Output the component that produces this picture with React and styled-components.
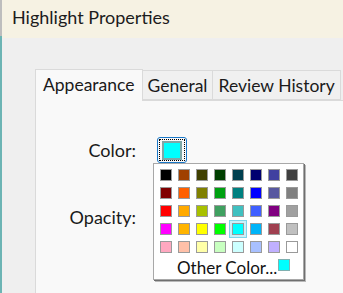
import React from 'react';
import styled, { createGlobalStyle } from 'styled-components';

const GlobalStyle = createGlobalStyle`
  html, body {
    margin: 0;
    padding: 0;
    background: #efefef;
    overflow: hidden;
  }
  body {
    font-family: Lato, "Open Sans", sans-serif;
    color: #1a1a1a;
  }
`;

const palette = [
  ['#000000', '#a04000', '#404000', '#003f00', '#004050', '#000070', '#4040a0', '#404040'],
  ['#800000', '#ff6000', '#808000', '#00a010', '#008080', '#0000ff', '#5858a0', '#808080'],
  ['#ff0000', '#ffaa00', '#a8c000', '#40a060', '#40c0c0', '#4060ff', '#800080', '#a0a0a0'],
  ['#ff00ff', '#ffb400', '#ffff00', '#00ff00', '#00ffff', '#00b4f8', '#a04050', '#c0c0c0'],
  ['#ffa8c0', '#ffc0a8', '#ffffa8', '#c8ffc0', '#ccffff', '#a8c0ff', '#c0b0ff', '#ffffff'],
];

const Window = styled.div`
  width: 343px;
  height: 293px;
  display: flex;
  overflow: hidden;
`;

const Edge = styled.div`
  width: 2px;
  flex: none;
  background: linear-gradient(#bdbdbd 0 36px, #6cb4b4 36px);
`;

const Main = styled.div`
  flex: 1;
  display: flex;
  flex-direction: column;
  min-width: 0;
`;

const TitleBar = styled.div`
  height: 38px;
  flex: none;
  background: #f6f2e3;
  padding: 5px 0 0 10px;
  box-sizing: border-box;
  font-size: 18px;
  line-height: 24px;
  color: #1c1c1c;
`;

const Body = styled.div`
  flex: 1;
  display: flex;
  flex-direction: column;
  padding: 31px 0 0 33px;
  background: #efefef;
`;

const TabStrip = styled.div`
  display: flex;
  align-items: flex-end;
  height: 31px;
  position: relative;
  z-index: 1;
`;

const Tab = styled.div`
  box-sizing: border-box;
  flex: none;
  height: ${p => (p.$active ? '32px' : '30px')};
  margin-bottom: ${p => (p.$active ? '-1px' : '0')};
  padding: 0 ${p => (p.$active ? '7px' : '5px')};
  border: 1px solid #dadada;
  border-bottom: ${p => (p.$active ? 'none' : '1px solid #dadada')};
  border-left-width: ${p => (p.$first ? '1px' : '0')};
  background: ${p => (p.$active ? '#f9f9f9' : '#f0f0f0')};
  font-size: 17.5px;
  line-height: ${p => (p.$active ? '29px' : '30px')};
  white-space: nowrap;
`;

const Panel = styled.div`
  flex: 1;
  position: relative;
  background: #f9f9f9;
  border-top: 1px solid #dadada;
  border-left: 1px solid #dadada;
  padding-top: 36px;
`;

const FieldRow = styled.div`
  display: flex;
  align-items: center;
  height: 26px;
  margin-top: ${p => p.$gap || 0}px;
`;

const Label = styled.div`
  width: 100px;
  text-align: right;
  font-size: 18px;
  margin-right: 21px;
`;

const ColorButton = styled.div`
  width: 30px;
  height: 26px;
  box-sizing: border-box;
  border: 1px solid #1a78c8;
  border-radius: 3px;
  padding: 1px;
  background: #f9f9f9;
`;

const FocusRing = styled.div`
  height: 100%;
  box-sizing: border-box;
  border: 1px dotted #000;
  display: flex;
  align-items: center;
  justify-content: center;
`;

const ButtonSwatch = styled.div`
  width: 20px;
  height: 19px;
  box-sizing: border-box;
  border: 2px solid #7ea7a7;
  background: ${p => p.$color};
`;

const Popup = styled.div`
  position: absolute;
  left: 117px;
  top: 62px;
  width: 151px;
  box-sizing: border-box;
  background: #ffffff;
  border: 1px solid #a8a8a8;
  box-shadow: 1px 1px 0 #6f6f6f, 2px 2px 0 #b8b8b8;
  padding: 2px 2px 4px 3px;
`;

const Grid = styled.div`
  display: grid;
  grid-template-columns: repeat(8, 18px);
  grid-auto-rows: 18px;
`;

const Cell = styled.div`
  box-sizing: border-box;
  display: flex;
  align-items: center;
  justify-content: center;
  border: 1px solid ${p => (p.$selected ? '#7fd6ea' : 'transparent')};
  background: ${p => (p.$selected ? '#c9f1fa' : 'transparent')};
`;

const Swatch = styled.div`
  width: 12px;
  height: 12px;
  box-sizing: border-box;
  border: 1px solid ${p => p.$edge || '#9a9a9a'};
  background: ${p => p.$color};
`;

const OtherRow = styled.div`
  display: flex;
  align-items: center;
  height: 16px;
  margin-top: 3px;
  padding-left: 20px;
  font-size: 17px;
  color: #111;
`;

const OtherSwatch = styled(Swatch)`
  margin-left: 1px;
  margin-top: -4px;
`;

export default function App() {
  return (
    <>
      <GlobalStyle />
      <Window>
        <Edge />
        <Main>
          <TitleBar>Highlight Properties</TitleBar>
          <Body>
            <TabStrip>
              <Tab $active $first>Appearance</Tab>
              <Tab>General</Tab>
              <Tab>Review History</Tab>
            </TabStrip>
            <Panel>
              <FieldRow>
                <Label>Color:</Label>
                <ColorButton>
                  <FocusRing>
                    <ButtonSwatch $color="#00ffff" />
                  </FocusRing>
                </ColorButton>
              </FieldRow>
              <FieldRow $gap={41}>
                <Label>Opacity:</Label>
              </FieldRow>
              <Popup>
                <Grid>
                  {palette.map((row, r) =>
                    row.map((c, i) => (
                      <Cell key={`${r}-${i}`} $selected={r === 3 && i === 4}>
                        <Swatch $color={c} />
                      </Cell>
                    ))
                  )}
                </Grid>
                <OtherRow>
                  Other Color...
                  <OtherSwatch $color="#00ffff" $edge="#7fb0b0" />
                </OtherRow>
              </Popup>
            </Panel>
          </Body>
        </Main>
      </Window>
    </>
  );
}
